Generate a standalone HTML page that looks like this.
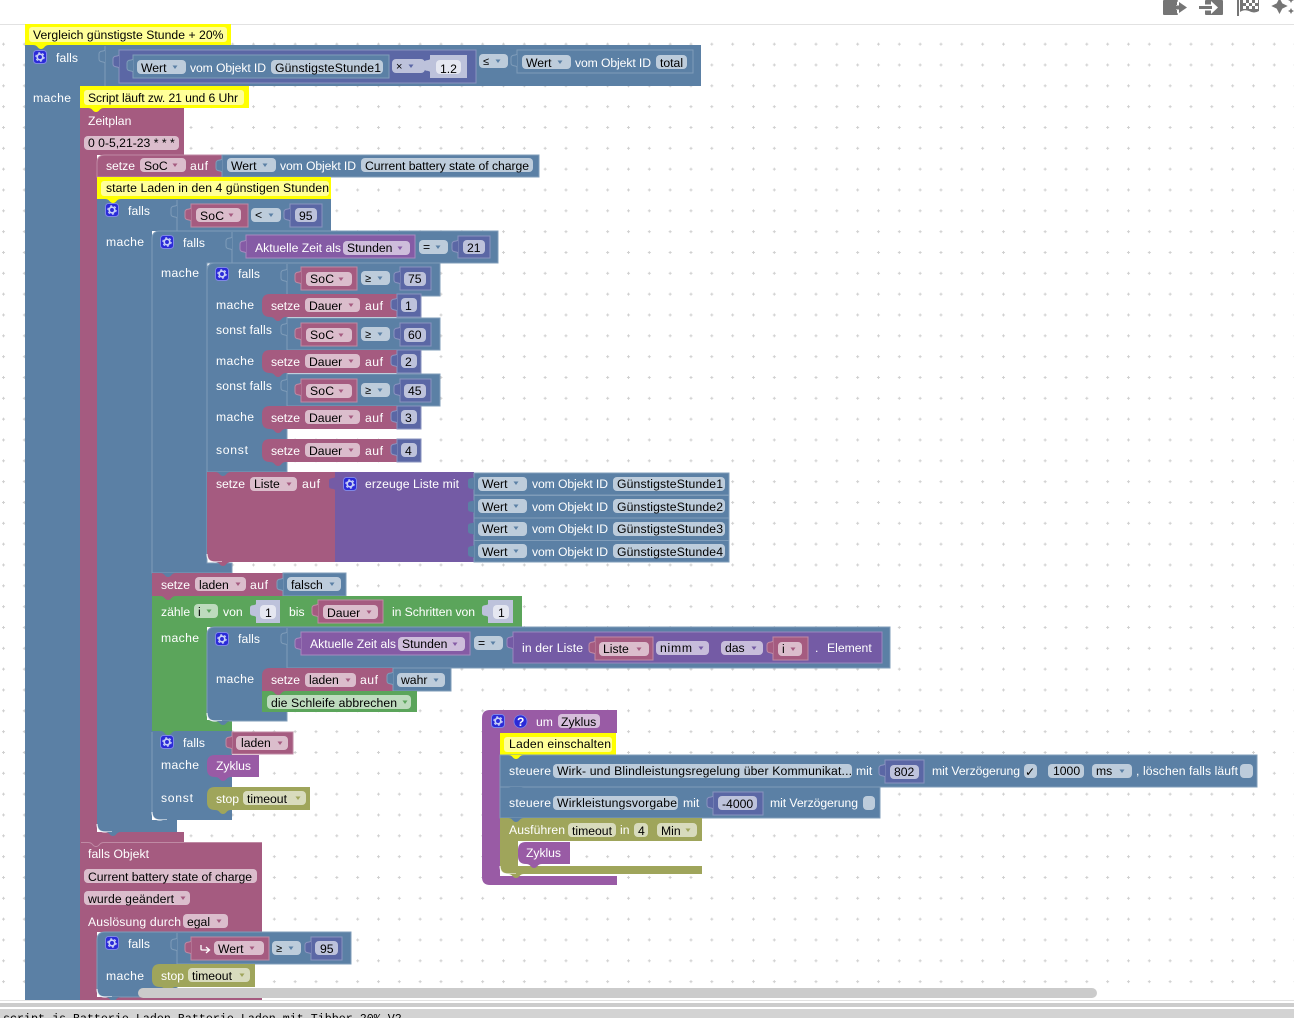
<!DOCTYPE html>
<html><head><meta charset="utf-8"><title>Blockly</title>
<style>
html,body{margin:0;padding:0;background:#fff;width:1294px;height:1018px;overflow:hidden}
svg{position:absolute;left:0;top:0;display:block}
text{font:12.2px "Liberation Sans","DejaVu Sans",sans-serif;fill:#000}
.w{fill:#fff}
.f{fill:#fff;fill-opacity:.6}
.cf{fill:#ffff99}
.b{fill:#5b80a5}.p{fill:#a55b80}.v{fill:#745ba5}.m{fill:#5b67a5}.g{fill:#5ba55b}.o{fill:#9fa55b}.z{fill:#995ba5}.t{fill:#855ba5}.y{fill:#ffff00}
.lb{stroke:#7f9cb9;stroke-width:1}
.lp{stroke:#bf8aa4;stroke-width:1}
.lv{stroke:#9a87bf;stroke-width:1}
.lm{stroke:#8a93bf;stroke-width:1}
.lg{stroke:#8abf8a;stroke-width:1}
.lo{stroke:#bcc08a;stroke-width:1}
.lz{stroke:#b689bf;stroke-width:1}
.lt{stroke:#a78abf;stroke-width:1}
.ly{stroke:#e8e800;stroke-width:1}
.n{fill:#bdc2db}
.ln{fill:none;stroke:#7f9cb9;stroke-width:1}
.hi{fill:none;stroke:#fff;stroke-width:1.2;stroke-opacity:.85}
.ab{fill:#5b80a5}.ap{fill:#a55b80}.av{fill:#745ba5}.ag{fill:#5ba55b}.ao{fill:#9fa55b}.at{fill:#855ba5}
.ic{fill:#757575}
</style></head>
<body>
<svg width="1294" height="1018" viewBox="0 0 1294 1018" xmlns="http://www.w3.org/2000/svg">
<defs>
<pattern id="dots" width="20.833" height="20.833" patternUnits="userSpaceOnUse" x="2" y="0.5">
<path d="M1.5 0.5v3M0 2h3" stroke="#d0d0d0" stroke-width="1" fill="none"/>
</pattern>
<path id="nt" d="M0 0q3 0 4.5 2t3.5 2t3.5-2t4.5-2z"/>
<path id="tb" d="M6 0C5 2 0 0 0 4V9C0 13 5 11 6 13"/>
<path id="ar" d="M.5 .5h5l-2.5 3.5z"/>
<path id="sd" d="M8 0H135V23H8Q0 23 0 15V8Q0 0 8 0Z"/>
<path id="st" d="M8 0H103V23H8Q0 23 0 15V8Q0 0 8 0Z"/>
<path id="zy" d="M8 0H52V22H8Q0 22 0 14V8Q0 0 8 0Z"/>
<g id="gear">
<rect x="0.5" y="0.5" width="13" height="13" rx="3" fill="#2a2ad8" stroke="#7f86e6" stroke-width="1"/>
<circle cx="7" cy="7" r="2.8" fill="none" stroke="#c9d0f7" stroke-width="1.7"/>
<circle cx="7" cy="7" r="4.2" fill="none" stroke="#c9d0f7" stroke-width="1.1" stroke-dasharray="2.2 2.2"/>
</g>
<clipPath id="cl"><rect x="0" y="24" width="1294" height="976"/></clipPath>
</defs>

<rect x="0" y="25" width="1294" height="975" fill="url(#dots)"/>
<rect x="0" y="24" width="1294" height="1" fill="#e2e2e2"/>

<g clip-path="url(#cl)">
<!-- main falls -->
<path class="b" d="M25 45H701V86H80V1000H25Z"/>
<path class="ln" d="M105 46V86"/>
<use href="#tb" x="99" y="50" class="b lb"/>
<use href="#gear" x="33" y="50"/>
<text class="w" x="56" y="62" textLength="22">falls</text>
<rect class="m lm" x="119" y="50" width="357" height="33"/>
<use href="#tb" x="113" y="55" class="m lm"/>
<rect class="b lb" x="133" y="55" width="256" height="23"/>
<use href="#tb" x="127" y="59" class="b lb"/>
<rect class="f" x="137" y="60" width="49" height="14" rx="4"/>
<text x="141" y="72">Wert</text><use href="#ar" x="172" y="65" class="ab"/>
<text class="w" x="190" y="72" textLength="76">vom Objekt ID</text>
<rect class="f" x="271" y="60" width="112" height="14" rx="4"/>
<text x="275" y="72" textLength="106">GünstigsteStunde1</text>
<rect class="f" x="392" y="59" width="33" height="14" rx="4"/>
<text x="396" y="70" style="font-size:11px">×</text><use href="#ar" x="408" y="64" class="ab" style="fill:#5b67a5"/>
<rect class="n" x="430" y="55" width="37" height="23"/>
<use href="#tb" x="424" y="59" class="n"/>
<rect class="f" x="436" y="60" width="25" height="14" rx="4"/>
<text x="440" y="73">1.2</text>
<rect class="f" x="479" y="54" width="29" height="14" rx="4"/>
<text x="483" y="65" style="font-size:11px">≤</text><use href="#ar" x="495" y="59" class="ab"/>
<rect class="b lb" x="517" y="50" width="176" height="23"/>
<use href="#tb" x="511" y="54" class="b lb"/>
<rect class="f" x="522" y="55" width="49" height="14" rx="4"/>
<text x="526" y="67">Wert</text><use href="#ar" x="557" y="60" class="ab"/>
<text class="w" x="575" y="67" textLength="76">vom Objekt ID</text>
<rect class="f" x="656" y="55" width="31" height="14" rx="4"/>
<text x="660" y="67">total</text>
<text class="w" x="33" y="102" textLength="38">mache</text>

<!-- Zeitplan + pink column -->
<path class="p" d="M80 108H184V155H97V832H184V842H80Z"/>
<text class="w" x="88" y="125">Zeitplan</text>
<rect class="f" x="84" y="136" width="95" height="14" rx="4"/>
<text x="88" y="147">0 0-5,21-23 * * *</text>

<!-- setze SoC -->
<path class="p lp" d="M105 155H222V177H97V163Q97 155 105 155Z"/>
<rect class="b lb" x="222" y="155" width="317" height="22"/>
<use href="#tb" x="216" y="159" class="b lb"/>
<text class="w" x="106" y="170" textLength="29">setze</text>
<rect class="f" x="140" y="158" width="46" height="14" rx="4"/>
<text x="144" y="170">SoC</text><use href="#ar" x="172" y="163" class="ap"/>
<text class="w" x="190" y="170" textLength="18">auf</text>
<rect class="f" x="227" y="158" width="49" height="14" rx="4"/>
<text x="231" y="170">Wert</text><use href="#ar" x="262" y="163" class="ab"/>
<text class="w" x="280" y="170" textLength="76">vom Objekt ID</text>
<rect class="f" x="361" y="158" width="172" height="14" rx="4"/>
<text x="365" y="170" textLength="164">Current battery state of charge</text>
<use href="#nt" x="105" y="177" class="p"/>

<!-- level 2 falls -->
<path class="b" d="M97 199H331V231H152V820H177V832H105Q97 832 97 824Z"/>
<path class="hi" d="M97 824Q97 832 105 832H112"/>
<path class="ln" d="M177 200V231"/>
<use href="#tb" x="171" y="205" class="b lb"/>
<use href="#gear" x="105" y="203"/>
<text class="w" x="128" y="215" textLength="22">falls</text>
<rect class="p lp" x="191" y="204" width="57" height="23"/>
<use href="#tb" x="185" y="208" class="p lp"/>
<rect class="f" x="196" y="208" width="45" height="14" rx="4"/>
<text x="200" y="220" textLength="24">SoC</text><use href="#ar" x="228" y="213" class="ap"/>
<rect class="f" x="251" y="208" width="30" height="14" rx="4"/>
<text x="255" y="219">&lt;</text><use href="#ar" x="268" y="213" class="ab"/>
<rect class="m lm" x="290" y="204" width="32" height="23"/>
<use href="#tb" x="284" y="208" class="m lm"/>
<rect class="f" x="295" y="208" width="22" height="14" rx="4"/>
<text x="299" y="220">95</text>
<text class="w" x="106" y="246" textLength="38">mache</text>

<!-- level 3 falls -->
<path class="b lb" d="M160 231H498V263H207V563H232V573H152V239Q152 231 160 231Z"/>
<path class="ln" d="M232 232V263"/>
<use href="#tb" x="226" y="237" class="b lb"/>
<use href="#gear" x="160" y="235"/>
<text class="w" x="183" y="247" textLength="22">falls</text>
<rect class="t lt" x="246" y="235" width="169" height="23"/>
<use href="#tb" x="240" y="240" class="t lt"/>
<text class="w" x="255" y="252">Aktuelle Zeit als</text>
<rect class="f" x="343" y="241" width="67" height="14" rx="4"/>
<text x="347" y="252">Stunden</text><use href="#ar" x="397" y="246" class="at"/>
<rect class="f" x="419" y="240" width="29" height="14" rx="4"/>
<text x="423" y="251">=</text><use href="#ar" x="435" y="245" class="ab"/>
<rect class="m lm" x="458" y="236" width="32" height="22"/>
<use href="#tb" x="452" y="240" class="m lm"/>
<rect class="f" x="463" y="240" width="22" height="14" rx="4"/>
<text x="467" y="252">21</text>
<text class="w" x="161" y="277" textLength="38">mache</text>

<!-- level 4 falls -->
<path class="b lb" d="M215 263H440V296H287V318H440V350H287V374H440V406H287V472H207V271Q207 263 215 263Z"/>
<use href="#gear" x="215" y="267"/>
<text class="w" x="238" y="278" textLength="22">falls</text>
<path class="ln" d="M287 264V296M287 318V350M287 374V406"/>
<use href="#tb" x="281" y="269" class="b lb"/>
<use href="#tb" x="281" y="323" class="b lb"/>
<use href="#tb" x="281" y="379" class="b lb"/>
<!-- SoC rows -->
<rect class="p lp" x="301" y="267" width="56" height="23"/><use href="#tb" x="295" y="271" class="p lp"/>
<rect class="f" x="306" y="272" width="46" height="14" rx="4"/><text x="310" y="283" textLength="24">SoC</text><use href="#ar" x="338" y="277" class="ap"/>
<rect class="f" x="361" y="271" width="29" height="14" rx="4"/><text x="365" y="282" style="font-size:11px">≥</text><use href="#ar" x="377" y="276" class="ab"/>
<rect class="m lm" x="400" y="267" width="31" height="23"/><use href="#tb" x="394" y="271" class="m lm"/>
<rect class="f" x="404" y="272" width="22" height="14" rx="4"/><text x="408" y="283">75</text>

<rect class="p lp" x="301" y="323" width="56" height="23"/><use href="#tb" x="295" y="327" class="p lp"/>
<rect class="f" x="306" y="328" width="46" height="14" rx="4"/><text x="310" y="339" textLength="24">SoC</text><use href="#ar" x="338" y="333" class="ap"/>
<rect class="f" x="361" y="327" width="29" height="14" rx="4"/><text x="365" y="338" style="font-size:11px">≥</text><use href="#ar" x="377" y="332" class="ab"/>
<rect class="m lm" x="400" y="323" width="31" height="23"/><use href="#tb" x="394" y="327" class="m lm"/>
<rect class="f" x="404" y="328" width="22" height="14" rx="4"/><text x="408" y="339">60</text>

<rect class="p lp" x="301" y="379" width="56" height="23"/><use href="#tb" x="295" y="383" class="p lp"/>
<rect class="f" x="306" y="384" width="46" height="14" rx="4"/><text x="310" y="395" textLength="24">SoC</text><use href="#ar" x="338" y="389" class="ap"/>
<rect class="f" x="361" y="383" width="29" height="14" rx="4"/><text x="365" y="394" style="font-size:11px">≥</text><use href="#ar" x="377" y="388" class="ab"/>
<rect class="m lm" x="400" y="379" width="31" height="23"/><use href="#tb" x="394" y="383" class="m lm"/>
<rect class="f" x="404" y="384" width="22" height="14" rx="4"/><text x="408" y="395">45</text>

<text class="w" x="216" y="309" textLength="38">mache</text>
<text class="w" x="216" y="334" textLength="56">sonst falls</text>
<text class="w" x="216" y="365" textLength="38">mache</text>
<text class="w" x="216" y="390" textLength="56">sonst falls</text>
<text class="w" x="216" y="421" textLength="38">mache</text>
<text class="w" x="216" y="454" textLength="32">sonst</text>

<!-- setze Dauer x4 -->
<use href="#sd" x="262" y="294" class="p"/><use href="#nt" x="270" y="317" class="p"/>
<rect class="m lm" x="397" y="294" width="24" height="23"/><use href="#tb" x="391" y="298" class="m lm"/>
<text class="w" x="271" y="310" textLength="29">setze</text><rect class="f" x="305" y="298" width="55" height="14" rx="4"/><text x="309" y="310">Dauer</text><use href="#ar" x="348" y="303" class="ap"/><text class="w" x="365" y="310" textLength="18">auf</text>
<rect class="f" x="401" y="298" width="16" height="14" rx="4"/><text x="405" y="310">1</text>

<use href="#sd" x="262" y="350" class="p"/><use href="#nt" x="270" y="373" class="p"/>
<rect class="m lm" x="397" y="350" width="24" height="23"/><use href="#tb" x="391" y="354" class="m lm"/>
<text class="w" x="271" y="366" textLength="29">setze</text><rect class="f" x="305" y="354" width="55" height="14" rx="4"/><text x="309" y="366">Dauer</text><use href="#ar" x="348" y="359" class="ap"/><text class="w" x="365" y="366" textLength="18">auf</text>
<rect class="f" x="401" y="354" width="16" height="14" rx="4"/><text x="405" y="366">2</text>

<use href="#sd" x="262" y="406" class="p"/><use href="#nt" x="270" y="429" class="p"/>
<rect class="m lm" x="397" y="406" width="24" height="23"/><use href="#tb" x="391" y="410" class="m lm"/>
<text class="w" x="271" y="422" textLength="29">setze</text><rect class="f" x="305" y="410" width="55" height="14" rx="4"/><text x="309" y="422">Dauer</text><use href="#ar" x="348" y="415" class="ap"/><text class="w" x="365" y="422" textLength="18">auf</text>
<rect class="f" x="401" y="410" width="16" height="14" rx="4"/><text x="405" y="422">3</text>

<use href="#sd" x="262" y="439" class="p"/><use href="#nt" x="270" y="462" class="p"/>
<rect class="m lm" x="397" y="439" width="24" height="23"/><use href="#tb" x="391" y="443" class="m lm"/>
<text class="w" x="271" y="455" textLength="29">setze</text><rect class="f" x="305" y="443" width="55" height="14" rx="4"/><text x="309" y="455">Dauer</text><use href="#ar" x="348" y="448" class="ap"/><text class="w" x="365" y="455" textLength="18">auf</text>
<rect class="f" x="401" y="443" width="16" height="14" rx="4"/><text x="405" y="455">4</text>

<!-- setze Liste -->
<path class="p" d="M207 472H335V562H215Q207 562 207 554Z"/>
<path class="hi" d="M207 554Q207 562 215 562H222"/>
<use href="#nt" x="215" y="472" class="b"/>
<use href="#nt" x="215" y="562" class="p"/>
<text class="w" x="216" y="488" textLength="29">setze</text>
<rect class="f" x="250" y="477" width="47" height="14" rx="4"/><text x="254" y="488">Liste</text><use href="#ar" x="286" y="482" class="ap"/>
<text class="w" x="302" y="488" textLength="18">auf</text>
<rect class="v" x="335" y="472" width="139" height="90"/>
<use href="#tb" x="329" y="477" class="v"/>
<use href="#gear" x="343" y="477"/>
<text class="w" x="365" y="488" textLength="94">erzeuge Liste mit</text>
<rect class="b lb" x="474" y="473" width="255" height="22"/><use href="#tb" x="468" y="477" class="b"/>
<rect class="b lb" x="474" y="495.5" width="255" height="22.5"/><use href="#tb" x="468" y="500" class="b"/>
<rect class="b lb" x="474" y="518" width="255" height="22.5"/><use href="#tb" x="468" y="522" class="b"/>
<rect class="b lb" x="474" y="540.5" width="255" height="21.5"/><use href="#tb" x="468" y="545" class="b"/>
<rect class="f" x="478" y="477" width="49" height="14" rx="4"/><text x="482" y="488">Wert</text><use href="#ar" x="513" y="481" class="ab"/><text class="w" x="532" y="488" textLength="76">vom Objekt ID</text><rect class="f" x="613" y="477" width="112" height="14" rx="4"/><text x="617" y="488" textLength="106">GünstigsteStunde1</text>
<rect class="f" x="478" y="499" width="49" height="14" rx="4"/><text x="482" y="511">Wert</text><use href="#ar" x="513" y="504" class="ab"/><text class="w" x="532" y="511" textLength="76">vom Objekt ID</text><rect class="f" x="613" y="499" width="112" height="14" rx="4"/><text x="617" y="511" textLength="106">GünstigsteStunde2</text>
<rect class="f" x="478" y="522" width="49" height="14" rx="4"/><text x="482" y="533">Wert</text><use href="#ar" x="513" y="526" class="ab"/><text class="w" x="532" y="533" textLength="76">vom Objekt ID</text><rect class="f" x="613" y="522" width="112" height="14" rx="4"/><text x="617" y="533" textLength="106">GünstigsteStunde3</text>
<rect class="f" x="478" y="544" width="49" height="14" rx="4"/><text x="482" y="556">Wert</text><use href="#ar" x="513" y="549" class="ab"/><text class="w" x="532" y="556" textLength="76">vom Objekt ID</text><rect class="f" x="613" y="544" width="112" height="14" rx="4"/><text x="617" y="556" textLength="106">GünstigsteStunde4</text>

<!-- setze laden falsch -->
<rect class="p" x="152" y="573" width="131" height="23"/>
<use href="#nt" x="160" y="573" class="b"/>
<rect class="b lb" x="283" y="573" width="63" height="23"/><use href="#tb" x="277" y="578" class="b lb"/>
<text class="w" x="161" y="589" textLength="29">setze</text>
<rect class="f" x="195" y="577" width="51" height="14" rx="4"/><text x="199" y="589">laden</text><use href="#ar" x="235" y="582" class="ap"/>
<text class="w" x="250" y="589" textLength="18">auf</text>
<rect class="f" x="287" y="577" width="54" height="14" rx="4"/><text x="291" y="589">falsch</text><use href="#ar" x="329" y="582" class="ab"/>

<!-- zähle -->
<path class="g" d="M152 596H522V627H207V720H232V731H152Z"/>
<use href="#nt" x="160" y="596" class="p"/>
<text class="w" x="161" y="616">zähle</text>
<rect class="f" x="194" y="604" width="24" height="14" rx="4"/><text x="198" y="616">i</text><use href="#ar" x="206" y="609" class="ag"/>
<text class="w" x="223" y="616">von</text>
<rect class="n" x="256" y="600" width="24" height="23"/><use href="#tb" x="250" y="604" class="n"/>
<rect class="f" x="260" y="605" width="16" height="14" rx="4"/><text x="265" y="617">1</text>
<text class="w" x="289" y="616">bis</text>
<rect class="p lp" x="318" y="600" width="65" height="23"/><use href="#tb" x="312" y="604" class="p lp"/>
<rect class="f" x="323" y="605" width="55" height="14" rx="4"/><text x="327" y="617">Dauer</text><use href="#ar" x="366" y="610" class="ap"/>
<text class="w" x="392" y="616" textLength="83">in Schritten von</text>
<rect class="n" x="488" y="600" width="25" height="23"/><use href="#tb" x="482" y="604" class="n"/>
<rect class="f" x="493" y="605" width="16" height="14" rx="4"/><text x="498" y="617">1</text>
<text class="w" x="161" y="642" textLength="38">mache</text>

<!-- falls in zähle -->
<path class="b lb" d="M215 627H890V668H287V721H215Q207 721 207 713V635Q207 627 215 627Z"/>
<path class="hi" d="M207 713Q207 721 215 721H222"/>
<use href="#nt" x="215" y="721" class="b"/>
<path class="ln" d="M287 628V668"/>
<use href="#tb" x="281" y="632" class="b lb"/>
<use href="#gear" x="215" y="632"/>
<text class="w" x="238" y="643" textLength="22">falls</text>
<rect class="t lt" x="301" y="632" width="169" height="23"/><use href="#tb" x="295" y="637" class="t lt"/>
<text class="w" x="310" y="648">Aktuelle Zeit als</text>
<rect class="f" x="398" y="637" width="67" height="14" rx="4"/><text x="402" y="648">Stunden</text><use href="#ar" x="452" y="642" class="at"/>
<rect class="f" x="474" y="636" width="29" height="14" rx="4"/><text x="478" y="647">=</text><use href="#ar" x="490" y="641" class="ab"/>
<rect class="v lv" x="513" y="632" width="369" height="31"/><use href="#tb" x="507" y="636" class="v lv"/>
<text class="w" x="522" y="652" textLength="61">in der Liste</text>
<rect class="p lp" x="595" y="637" width="58" height="23"/><use href="#tb" x="589" y="641" class="p lp"/>
<rect class="f" x="599" y="642" width="50" height="14" rx="4"/><text x="603" y="653">Liste</text><use href="#ar" x="636" y="647" class="ap"/>
<rect class="f" x="656" y="641" width="53" height="14" rx="4"/><text x="660" y="652" textLength="32">nimm</text><use href="#ar" x="698" y="646" class="av"/>
<rect class="f" x="721" y="641" width="42" height="14" rx="4"/><text x="725" y="652">das</text><use href="#ar" x="751" y="646" class="av"/>
<rect class="p lp" x="773" y="637" width="35" height="23"/><use href="#tb" x="767" y="641" class="p lp"/>
<rect class="f" x="778" y="642" width="24" height="14" rx="4"/><text x="782" y="653">i</text><use href="#ar" x="790" y="647" class="ap"/>
<text class="w" x="815" y="652">.</text>
<text class="w" x="827" y="652">Element</text>
<text class="w" x="216" y="683" textLength="38">mache</text>

<path class="p" d="M270 668H393V691H262V676Q262 668 270 668Z"/>
<rect class="b lb" x="393" y="668" width="58" height="23"/><use href="#tb" x="387" y="672" class="b lb"/>
<text class="w" x="271" y="684" textLength="29">setze</text>
<rect class="f" x="305" y="673" width="51" height="14" rx="4"/><text x="309" y="684">laden</text><use href="#ar" x="345" y="678" class="ap"/>
<text class="w" x="360" y="684" textLength="18">auf</text>
<rect class="f" x="397" y="673" width="48" height="14" rx="4"/><text x="401" y="684">wahr</text><use href="#ar" x="433" y="678" class="ab"/>
<rect class="g" x="262" y="691" width="155" height="21"/>
<use href="#nt" x="270" y="691" class="p"/>
<rect class="f" x="267" y="695" width="144" height="14" rx="4"/><text x="271" y="707" textLength="126">die Schleife abbrechen</text><use href="#ar" x="402" y="700" class="ag"/>

<!-- falls laden -->
<path class="b" d="M152 731H232V820H160Q152 820 152 812Z"/>
<path class="ln" d="M152 732V812"/>
<path class="hi" d="M152 812Q152 820 160 820H167"/>
<use href="#nt" x="160" y="731" class="g"/>
<use href="#nt" x="160" y="820" class="b"/>
<use href="#gear" x="160" y="735"/>
<text class="w" x="183" y="747" textLength="22">falls</text>
<rect class="p lp" x="232" y="732" width="61" height="22"/><use href="#tb" x="226" y="736" class="p lp"/>
<rect class="f" x="236" y="736" width="52" height="14" rx="4"/><text x="241" y="747">laden</text><use href="#ar" x="277" y="741" class="ap"/>
<text class="w" x="161" y="769" textLength="38">mache</text>
<use href="#zy" x="207" y="755" class="z"/><use href="#nt" x="215" y="777" class="z"/>
<text class="w" x="216" y="770" textLength="35">Zyklus</text>
<text class="w" x="161" y="802" textLength="32">sonst</text>
<use href="#st" x="207" y="787" class="o"/><use href="#nt" x="215" y="810" class="o"/>
<text class="w" x="216" y="803">stop</text>
<rect class="f" x="243" y="791" width="63" height="14" rx="4"/><text x="247" y="803">timeout</text><use href="#ar" x="295" y="796" class="ao"/>
<use href="#nt" x="105" y="832" class="b"/>

<!-- falls Objekt -->
<path class="p" d="M80 842H262V932H97V997H262V1000H80Z"/>
<path fill="none" stroke="#bf8aa4" d="M81 842.5H88q3 0 4.5 2t3.5 2t3.5-2t4.5-2H262"/>
<text class="w" x="88" y="858" textLength="61">falls Objekt</text>
<rect class="f" x="84" y="869" width="173" height="14" rx="4"/><text x="88" y="881" textLength="164">Current battery state of charge</text>
<rect class="f" x="84" y="891" width="106" height="14" rx="4"/><text x="88" y="903" textLength="86">wurde geändert</text><use href="#ar" x="180" y="896" class="ap"/>
<text class="w" x="88" y="926" textLength="93">Auslösung durch</text>
<rect class="f" x="183" y="914" width="45" height="14" rx="4"/><text x="187" y="926">egal</text><use href="#ar" x="216" y="919" class="ap"/>

<path class="b lb" d="M105 932H351V964H177V997H105Q97 997 97 989V940Q97 932 105 932Z"/>
<path class="hi" d="M97 989Q97 997 105 997H112"/>
<use href="#nt" x="105" y="997" class="b"/>
<path class="ln" d="M177 933V964"/>
<use href="#tb" x="171" y="938" class="b lb"/>
<use href="#gear" x="105" y="936"/>
<text class="w" x="128" y="948" textLength="22">falls</text>
<rect class="p lp" x="191" y="937" width="78" height="23"/><use href="#tb" x="185" y="941" class="p lp"/>
<path d="M201 945V949Q201 950 202 950H209M206 947L209.5 950L206 953" fill="none" stroke="#fff" stroke-width="1.3"/>
<rect class="f" x="214" y="941" width="50" height="14" rx="4"/><text x="218" y="953">Wert</text><use href="#ar" x="249" y="946" class="ap"/>
<rect class="f" x="272" y="941" width="29" height="14" rx="4"/><text x="276" y="952" style="font-size:11px">≥</text><use href="#ar" x="288" y="946" class="ab"/>
<rect class="m lm" x="311" y="937" width="31" height="23"/><use href="#tb" x="305" y="941" class="m lm"/>
<rect class="f" x="315" y="941" width="23" height="14" rx="4"/><text x="320" y="953">95</text>
<text class="w" x="106" y="980" textLength="38">mache</text>
<use href="#st" x="152" y="964" class="o"/><use href="#nt" x="160" y="987" class="o"/>
<text class="w" x="161" y="980">stop</text>
<rect class="f" x="188" y="968" width="62" height="14" rx="4"/><text x="192" y="980">timeout</text><use href="#ar" x="239" y="973" class="ao"/>

<!-- comments -->
<rect class="y" x="25" y="24" width="206" height="21"/>
<rect class="cf" x="29" y="27" width="198" height="15" rx="3"/>
<text x="33" y="39" textLength="190.5">Vergleich günstigste Stunde + 20%</text>
<use href="#nt" x="33" y="45" class="y"/>
<rect class="y" x="80" y="86" width="169" height="22"/>
<rect class="cf" x="84" y="90" width="160" height="15" rx="3"/>
<text x="88" y="102" textLength="150">Script läuft zw. 21 und 6 Uhr</text>
<use href="#nt" x="88" y="108" class="y"/>
<rect class="y" x="97" y="177" width="234" height="22"/>
<rect class="cf" x="101" y="181" width="228" height="15" rx="3"/>
<text x="106" y="192" textLength="223">starte Laden in den 4 günstigen Stunden</text>
<use href="#nt" x="105" y="199" class="y"/>

<!-- second stack: Zyklus function -->
<path class="z" d="M490 710H617V733H500V876H617V885H490Q482 885 482 877V718Q482 710 490 710Z"/>
<use href="#gear" x="491" y="714"/>
<circle cx="520.5" cy="721.5" r="6.5" fill="#2a2ad8" stroke="#7f86e6" stroke-width=".8"/>
<text x="517" y="726" style="font:bold 12px 'Liberation Sans',sans-serif;fill:#fff">?</text>
<text class="w" x="536" y="726">um</text>
<rect class="f" x="558" y="714" width="42" height="14" rx="4"/><text x="561" y="726">Zyklus</text>
<rect class="y" x="500" y="733" width="116" height="22"/>
<rect class="cf" x="504" y="737" width="108" height="15" rx="3"/>
<text x="509" y="748" textLength="102">Laden einschalten</text>

<rect class="b lb" x="500" y="755" width="757" height="32"/>
<use href="#nt" x="508" y="755" class="y"/>
<text class="w" x="509" y="775" textLength="42">steuere</text>
<rect class="f" x="553" y="764" width="299" height="14" rx="4"/><text x="557" y="775" textLength="295">Wirk- und Blindleistungsregelung über Kommunikat...</text>
<text class="w" x="856" y="775">mit</text>
<rect class="m lm" x="885" y="760" width="39" height="23"/><use href="#tb" x="879" y="764" class="m lm"/>
<rect class="f" x="890" y="765" width="29" height="14" rx="4"/><text x="894" y="776">802</text>
<text class="w" x="932" y="775" textLength="88">mit Verzögerung</text>
<rect class="f" x="1024" y="764" width="13" height="14" rx="4"/><text x="1025" y="776">✓</text>
<rect class="f" x="1048" y="764" width="36" height="14" rx="4"/><text x="1053" y="775">1000</text>
<rect class="f" x="1092" y="764" width="40" height="14" rx="4"/><text x="1096" y="775">ms</text><use href="#ar" x="1119" y="769" class="ab"/>
<text class="w" x="1136" y="775" textLength="102">, löschen falls läuft</text>
<rect class="f" x="1240" y="764" width="13" height="14" rx="4"/>

<rect class="b lb" x="500" y="787" width="380" height="31"/>
<use href="#nt" x="508" y="787" class="b"/>
<text class="w" x="509" y="807" textLength="42">steuere</text>
<rect class="f" x="553" y="796" width="125" height="14" rx="4"/><text x="557" y="807" textLength="120">Wirkleistungsvorgabe</text>
<text class="w" x="683" y="807">mit</text>
<rect class="m lm" x="713" y="792" width="50" height="23"/><use href="#tb" x="707" y="796" class="m lm"/>
<rect class="f" x="718" y="796" width="39" height="14" rx="4"/><text x="722" y="808">-4000</text>
<text class="w" x="770" y="807" textLength="88">mit Verzögerung</text>
<rect class="f" x="863" y="796" width="12" height="14" rx="4"/>

<path class="o" d="M500 818H702V841H518V866H702V874H508Q500 874 500 866Z"/>
<path class="hi" d="M500 866Q500 874 508 874H516"/>
<use href="#nt" x="508" y="874" class="o"/>
<use href="#nt" x="508" y="818" class="b"/>
<text class="w" x="509" y="834" textLength="56">Ausführen</text>
<rect class="f" x="568" y="823" width="48" height="14" rx="4"/><text x="572" y="835">timeout</text>
<text class="w" x="620" y="834">in</text>
<rect class="f" x="634" y="823" width="14" height="14" rx="4"/><text x="638" y="835">4</text>
<rect class="f" x="657" y="823" width="40" height="14" rx="4"/><text x="661" y="835">Min</text><use href="#ar" x="685" y="828" class="ao"/>
<use href="#zy" x="518" y="842" class="z"/><use href="#nt" x="526" y="864" class="z"/>
<text class="w" x="526" y="857" textLength="35">Zyklus</text>

<!-- scrollbar -->
<path d="M143 988H1092a5 5 0 0 1 0 10H143a5 5 0 0 1 0-10Z" fill="#cbcbcb"/>
</g>

<!-- toolbar icons -->
<rect class="ic" x="1163" y="0" width="15" height="15" rx="1"/>
<path d="M1176 5h1V1.5L1179 2v11l-2 .5V10h-1z" fill="#fff"/>
<path class="ic" d="M1173 5.5h6V2l8 5.5-8 5.5V9.5h-6z"/>
<rect class="ic" x="1205" y="0" width="18" height="15" rx="1"/>
<path d="M1205 4.5h6V1l7 6.5-7 6.5v-3.5h-6z" fill="#fff"/>
<path class="ic" d="M1199 6h13v3h-13z"/>
<path class="ic" d="M1237 0h2v16h-2z"/>
<path class="ic" d="M1240 0h19v11q-5 3-10 0q-5-2-9 1z"/>
<path fill="#fff" d="M1243 0h3v3h-3zM1249 0h3v3h-3zM1255 0h3v3h-3zM1246 3h3v3h-3zM1252 3h3v3h-3zM1243 6h3v3h-3zM1249 6h3v3h-3zM1255 6h3v3h-3z"/>
<path class="ic" d="M1279.5 -2l2.8 5.4 5.4 2.6-5.4 2.6-2.8 5.4-2.8-5.4-5.4-2.6 5.4-2.6z"/>
<path class="ic" d="M1291 8l1 2 2 1-2 1-1 2-1-2-2-1 2-1zM1291 -3l1 2 2 1-2 1-1 2-1-2-2-1 2-1z"/>

<!-- bottom bars -->
<rect x="0" y="1000" width="1294" height="1" fill="#e2e2e2"/>
<rect x="0" y="1003" width="1294" height="4" fill="#cccccc"/>
<rect x="0" y="1009" width="1294" height="9" fill="#d3d3d3"/>
<text x="3" y="1022" style="font:11.67px 'Liberation Mono',monospace;fill:#000">script.js.Batterie_Laden.Batterie_Laden_mit_Tibber_20%_V2</text>
</svg>
</body></html>
